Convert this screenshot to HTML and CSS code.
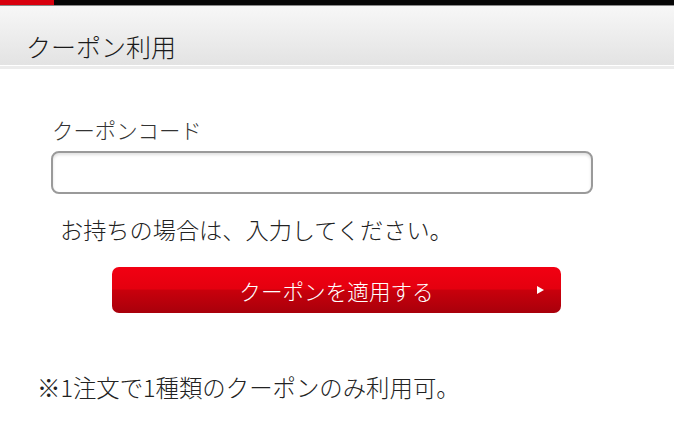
FILE: index.html
```html
<!DOCTYPE html>
<html lang="ja">
<head>
  <meta charset="UTF-8">
  <title>クーポン利用</title>
  <link rel="stylesheet" href="styles.css">
</head>
<body>
  <div class="topbar"></div>
  <header class="page-header">
    <h1 class="page-title">クーポン利用</h1>
  </header>

  <form class="coupon-form">
    <label class="field-label" for="coupon-code">クーポンコード</label>
    <input type="text" id="coupon-code" class="coupon-input">
    <p class="hint">お持ちの場合は、入力してください。</p>
    <button type="button" class="apply-btn">クーポンを適用する<span class="arrow"></span></button>
  </form>

  <p class="notice">※1注文で1種類のクーポンのみ利用可。</p>
</body>
</html>
```

FILE: styles.css
```css
body {
  margin: 0;
  font-family: "Noto Sans CJK JP", "Noto Sans", sans-serif;
  background: #fff;
  color: #222;
}

.topbar {
  height: 5px;
  background: linear-gradient(to right, #d8000e 54px, #060606 54px);
  border-bottom: 1px solid #8a8a8a;
}

.page-header {
  box-sizing: border-box;
  height: 60px;
  background: linear-gradient(to bottom, #f7f7f7, #e3e3e3);
  border-bottom: 1px solid #fff;
  box-shadow: 0 3px 0 #ececec;
  padding: 24px 0 0 26px;
}

.page-title {
  margin: 0;
  font-size: 25px;
  line-height: 33px;
  font-weight: 300;
  color: #1a1a1a;
}

.coupon-form {
  padding: 50px 0 0 51px;
  width: 542px;
}

.field-label {
  display: block;
  margin-left: 1px;
  font-size: 21.4px;
  line-height: 28px;
  font-weight: 300;
  color: #333;
}

.coupon-input {
  display: block;
  box-sizing: border-box;
  width: 542px;
  height: 43px;
  margin-top: 7px;
  border: 2px solid #9a9a9a;
  border-radius: 8px;
  box-shadow: inset 0 2px 3px rgba(0, 0, 0, 0.12);
  font-size: 18px;
}

.hint {
  margin: 21px 0 0 9px;
  font-size: 23.2px;
  line-height: 28px;
  font-weight: 300;
  color: #222;
}

.apply-btn {
  position: relative;
  display: block;
  width: 449px;
  height: 46px;
  margin: 24px 0 0 61px;
  border: none;
  border-radius: 7px;
  background: linear-gradient(to bottom, #f20012 0%, #e4000f 48%, #c9000c 50%, #a8000b 100%);
  color: #fff;
  font-family: inherit;
  font-size: 21.6px;
  font-weight: 300;
  padding: 0;
  cursor: pointer;
}

.arrow {
  position: absolute;
  right: 17px;
  top: 19px;
  width: 0;
  height: 0;
  border-top: 4px solid transparent;
  border-bottom: 4px solid transparent;
  border-left: 7px solid #fff;
}

.notice {
  margin: 60px 0 0 37px;
  font-size: 23.4px;
  line-height: 28px;
  font-weight: 300;
  color: #222;
}
```
